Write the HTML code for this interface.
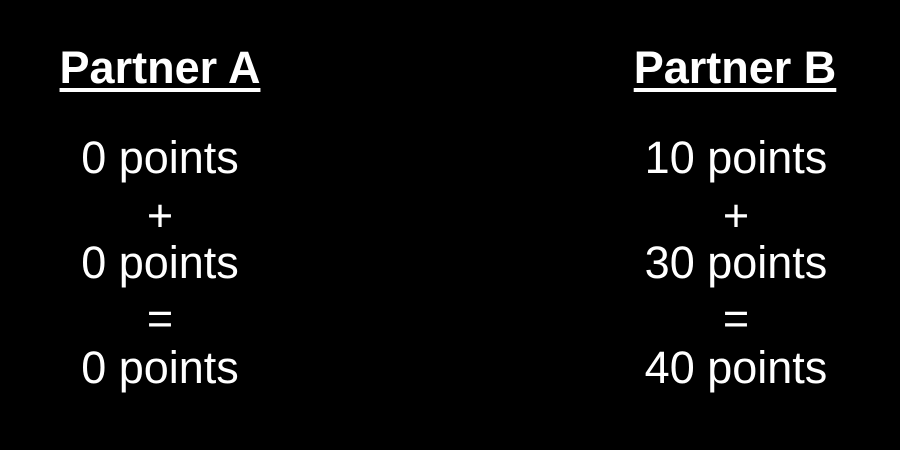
<!DOCTYPE html>
<html><head><style>
html,body{margin:0;padding:0;background:#000;width:900px;height:450px;overflow:hidden}
body{position:relative;font-family:"Liberation Sans",Arial,sans-serif;color:#fff}
.t{position:absolute;width:300px;text-align:center;line-height:1;white-space:nowrap}
.h{font-weight:bold;font-size:45px;text-decoration:underline;text-decoration-thickness:4px;text-underline-offset:5px}
.n{font-size:45px}
</style></head><body>
<div class="t h" style="left:10px;top:45px">Partner A</div>
<div class="t h" style="left:585px;top:45px">Partner B</div>

<div class="t n" style="left:10px;top:135px">0 points</div>
<div class="t n" style="left:10px;top:193px">+</div>
<div class="t n" style="left:10px;top:240px">0 points</div>
<div class="t n" style="left:10px;top:296px">=</div>
<div class="t n" style="left:10px;top:345px">0 points</div>

<div class="t n" style="left:586px;top:135px">10 points</div>
<div class="t n" style="left:586px;top:193px">+</div>
<div class="t n" style="left:586px;top:240px">30 points</div>
<div class="t n" style="left:586px;top:296px">=</div>
<div class="t n" style="left:586px;top:345px">40 points</div>
</body></html>
